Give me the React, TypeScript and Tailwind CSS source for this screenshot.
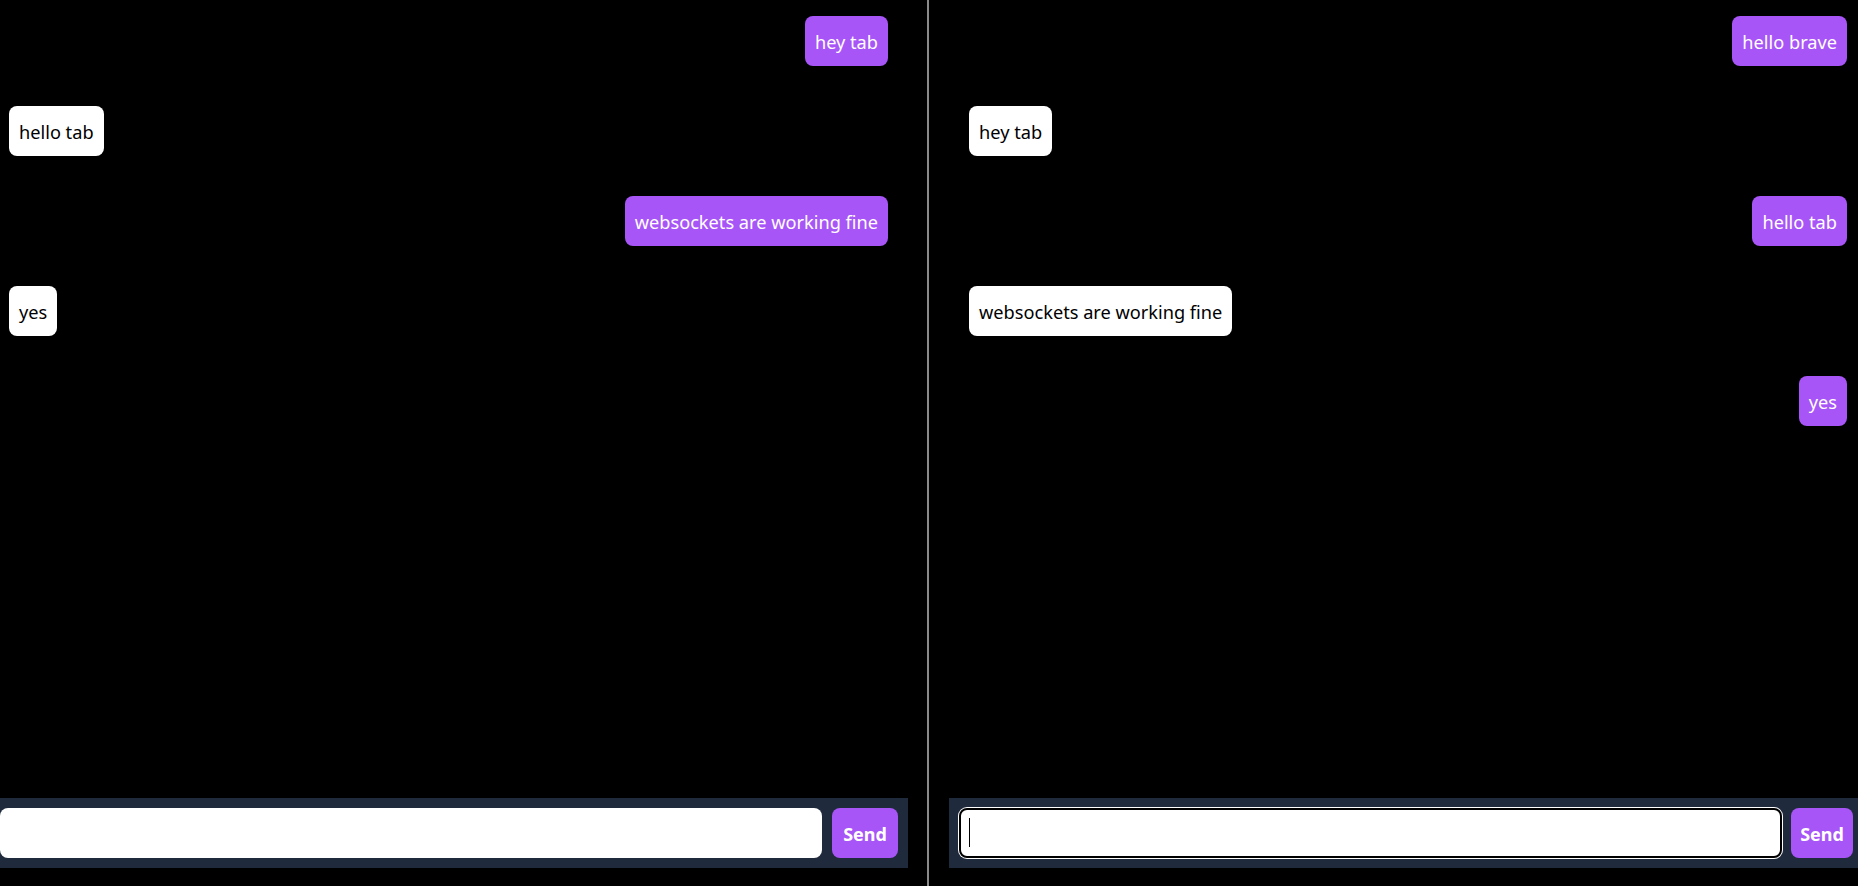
type Msg = { text: string; mine: boolean };

const leftMessages: Msg[] = [
  { text: "hey tab", mine: true },
  { text: "hello tab", mine: false },
  { text: "websockets are working fine", mine: true },
  { text: "yes", mine: false },
];

const rightMessages: Msg[] = [
  { text: "hello brave", mine: true },
  { text: "hey tab", mine: false },
  { text: "hello tab", mine: true },
  { text: "websockets are working fine", mine: false },
  { text: "yes", mine: true },
];

function Bubble({ msg }: { msg: Msg }) {
  return (
    <div className={msg.mine ? "flex justify-end" : "flex justify-start"}>
      <div
        className={
          msg.mine
            ? "rounded-lg bg-[#a855f7] px-[10px] pb-[10px] pt-[12px] text-[18.2px] leading-7 text-white"
            : "rounded-lg bg-white px-[10px] pb-[10px] pt-[12px] text-[18.2px] leading-7 text-black"
        }
      >
        {msg.text}
      </div>
    </div>
  );
}

export default function App() {
  return (
    <div
      className="flex h-[886px] w-[1858px] overflow-hidden bg-black"
      style={{ fontFamily: '"Noto Sans", "Open Sans", sans-serif' }}
    >
      {/* left window */}
      <section className="flex w-[927px] shrink-0 flex-col">
        <div className="flex flex-1 flex-col gap-10 pl-[9px] pr-[39px] pt-4">
          {leftMessages.map((m, i) => (
            <Bubble key={i} msg={m} />
          ))}
        </div>
        <div className="mb-[18px] flex h-[70px] w-[908px] items-center gap-[10px] bg-[#1f2a3c] pr-[10px]">
          <input className="h-[50px] flex-1 rounded-lg bg-white px-[10px] text-[18px] outline-none" />
          <button className="h-[50px] w-[66px] rounded-lg bg-[#a855f7] pt-[2px] text-[18px] font-bold text-white">
            Send
          </button>
        </div>
      </section>

      <div className="w-[2px] shrink-0 bg-[#8a8a8a]" />

      {/* right window */}
      <section className="flex min-w-0 flex-1 flex-col overflow-hidden">
        <div className="flex flex-1 flex-col gap-10 pl-10 pr-[11px] pt-4">
          {rightMessages.map((m, i) => (
            <Bubble key={i} msg={m} />
          ))}
        </div>
        <div className="mb-[18px] ml-5 flex h-[70px] w-[914px] shrink-0 items-center gap-[9px] bg-[#1f2a3c] pl-[10px] pr-[10px]">
          <div className="relative h-[50px] w-[823px] rounded-lg border-2 border-black bg-white shadow-[0_0_0_1px_#ffffff]">
            <span className="absolute left-[8px] top-[8px] h-[29px] w-px bg-black" />
          </div>
          <button className="h-[50px] w-[62px] rounded-lg bg-[#a855f7] pt-[2px] text-[18px] font-bold text-white">
            Send
          </button>
        </div>
      </section>
    </div>
  );
}
